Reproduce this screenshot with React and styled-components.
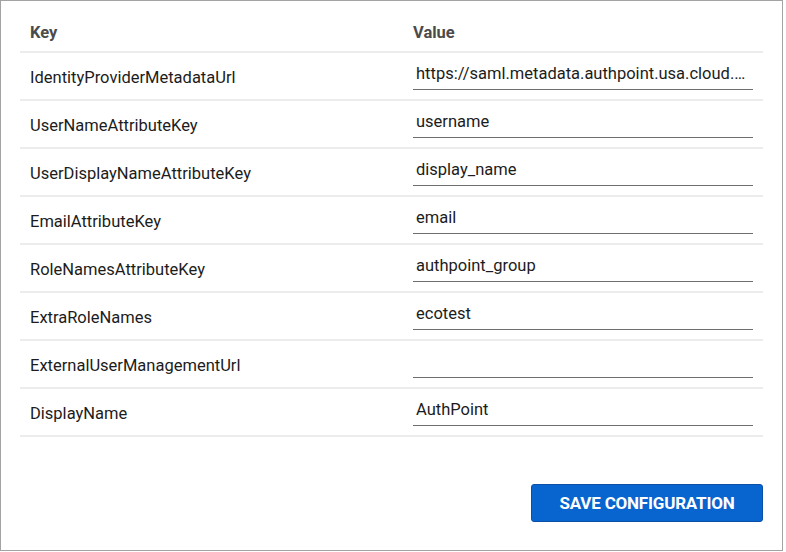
import styled, { createGlobalStyle } from "styled-components";

const rows = [
    { key: 'IdentityProviderMetadataUrl', value: 'https://saml.metadata.authpoint.usa.cloud.…' },
    { key: 'UserNameAttributeKey', value: 'username' },
    { key: 'UserDisplayNameAttributeKey', value: 'display_name' },
    { key: 'EmailAttributeKey', value: 'email' },
    { key: 'RoleNamesAttributeKey', value: 'authpoint_group' },
    { key: 'ExtraRoleNames', value: 'ecotest' },
    { key: 'ExternalUserManagementUrl', value: '' },
    { key: 'DisplayName', value: 'AuthPoint' },
];

const GlobalStyle = createGlobalStyle`
    body {
        margin: 0;
        background: #ffffff;
        font-family: Roboto, "Liberation Sans", sans-serif;
    }
`

const Frame = styled.div`
    box-sizing: border-box;
    width: 783px;
    height: 551px;
    border: 1px solid #a3a3a3;
    padding: 11px 19px 0 19px;
`

const Table = styled.div`
    width: 743px;
    display: flex;
    flex-direction: column;
`

const KeyCell = styled.div`
    padding-left: 10px;
    padding-top: 3px;
`

const ValueCell = styled.div`
    padding-left: 0;
`

const Row = styled.div`
    display: grid;
    grid-template-columns: 393px 1fr;
    align-items: center;
    height: 48px;
    box-sizing: border-box;
    border-bottom: 2px solid #ececec;
    color: #1c1c1c;
    font-size: 16.5px;
`

const HeaderRow = styled(Row)`
    height: 41px;
    padding-top: 2px;
    font-weight: 700;
    color: #4b4b4b;

    ${KeyCell} {
        padding-top: 0;
    }
`

const Field = styled.div`
    box-sizing: border-box;
    width: 340px;
    height: 30px;
    margin-top: -3px;
    padding: 4px 3px 0 3px;
    border-bottom: 1px solid #6e6e6e;
    white-space: nowrap;
    overflow: hidden;
    text-overflow: ellipsis;
    color: #1c1c1c;
`

const Footer = styled.div`
    width: 743px;
    display: flex;
    justify-content: flex-end;
    padding-top: 47px;
`

const SaveButton = styled.button`
    width: 232px;
    height: 38px;
    border: 1px solid #0b4fa6;
    border-radius: 3px;
    background-color: #0865cf;
    color: #ffffff;
    font-family: Roboto, "Liberation Sans", sans-serif;
    font-size: 17px;
    font-weight: 700;
    text-transform: uppercase;
    letter-spacing: -0.2px;
    cursor: pointer;
`

const App = () => {
    return (
        <>
            <GlobalStyle />
            <Frame>
                <Table>
                    <HeaderRow>
                        <KeyCell>Key</KeyCell>
                        <ValueCell>Value</ValueCell>
                    </HeaderRow>
                    {rows.map(row => (
                        <Row key={row.key}>
                            <KeyCell>{row.key}</KeyCell>
                            <ValueCell>
                                <Field>{row.value}</Field>
                            </ValueCell>
                        </Row>
                    ))}
                </Table>
                <Footer>
                    <SaveButton>Save Configuration</SaveButton>
                </Footer>
            </Frame>
        </>
    );
}

export default App;
